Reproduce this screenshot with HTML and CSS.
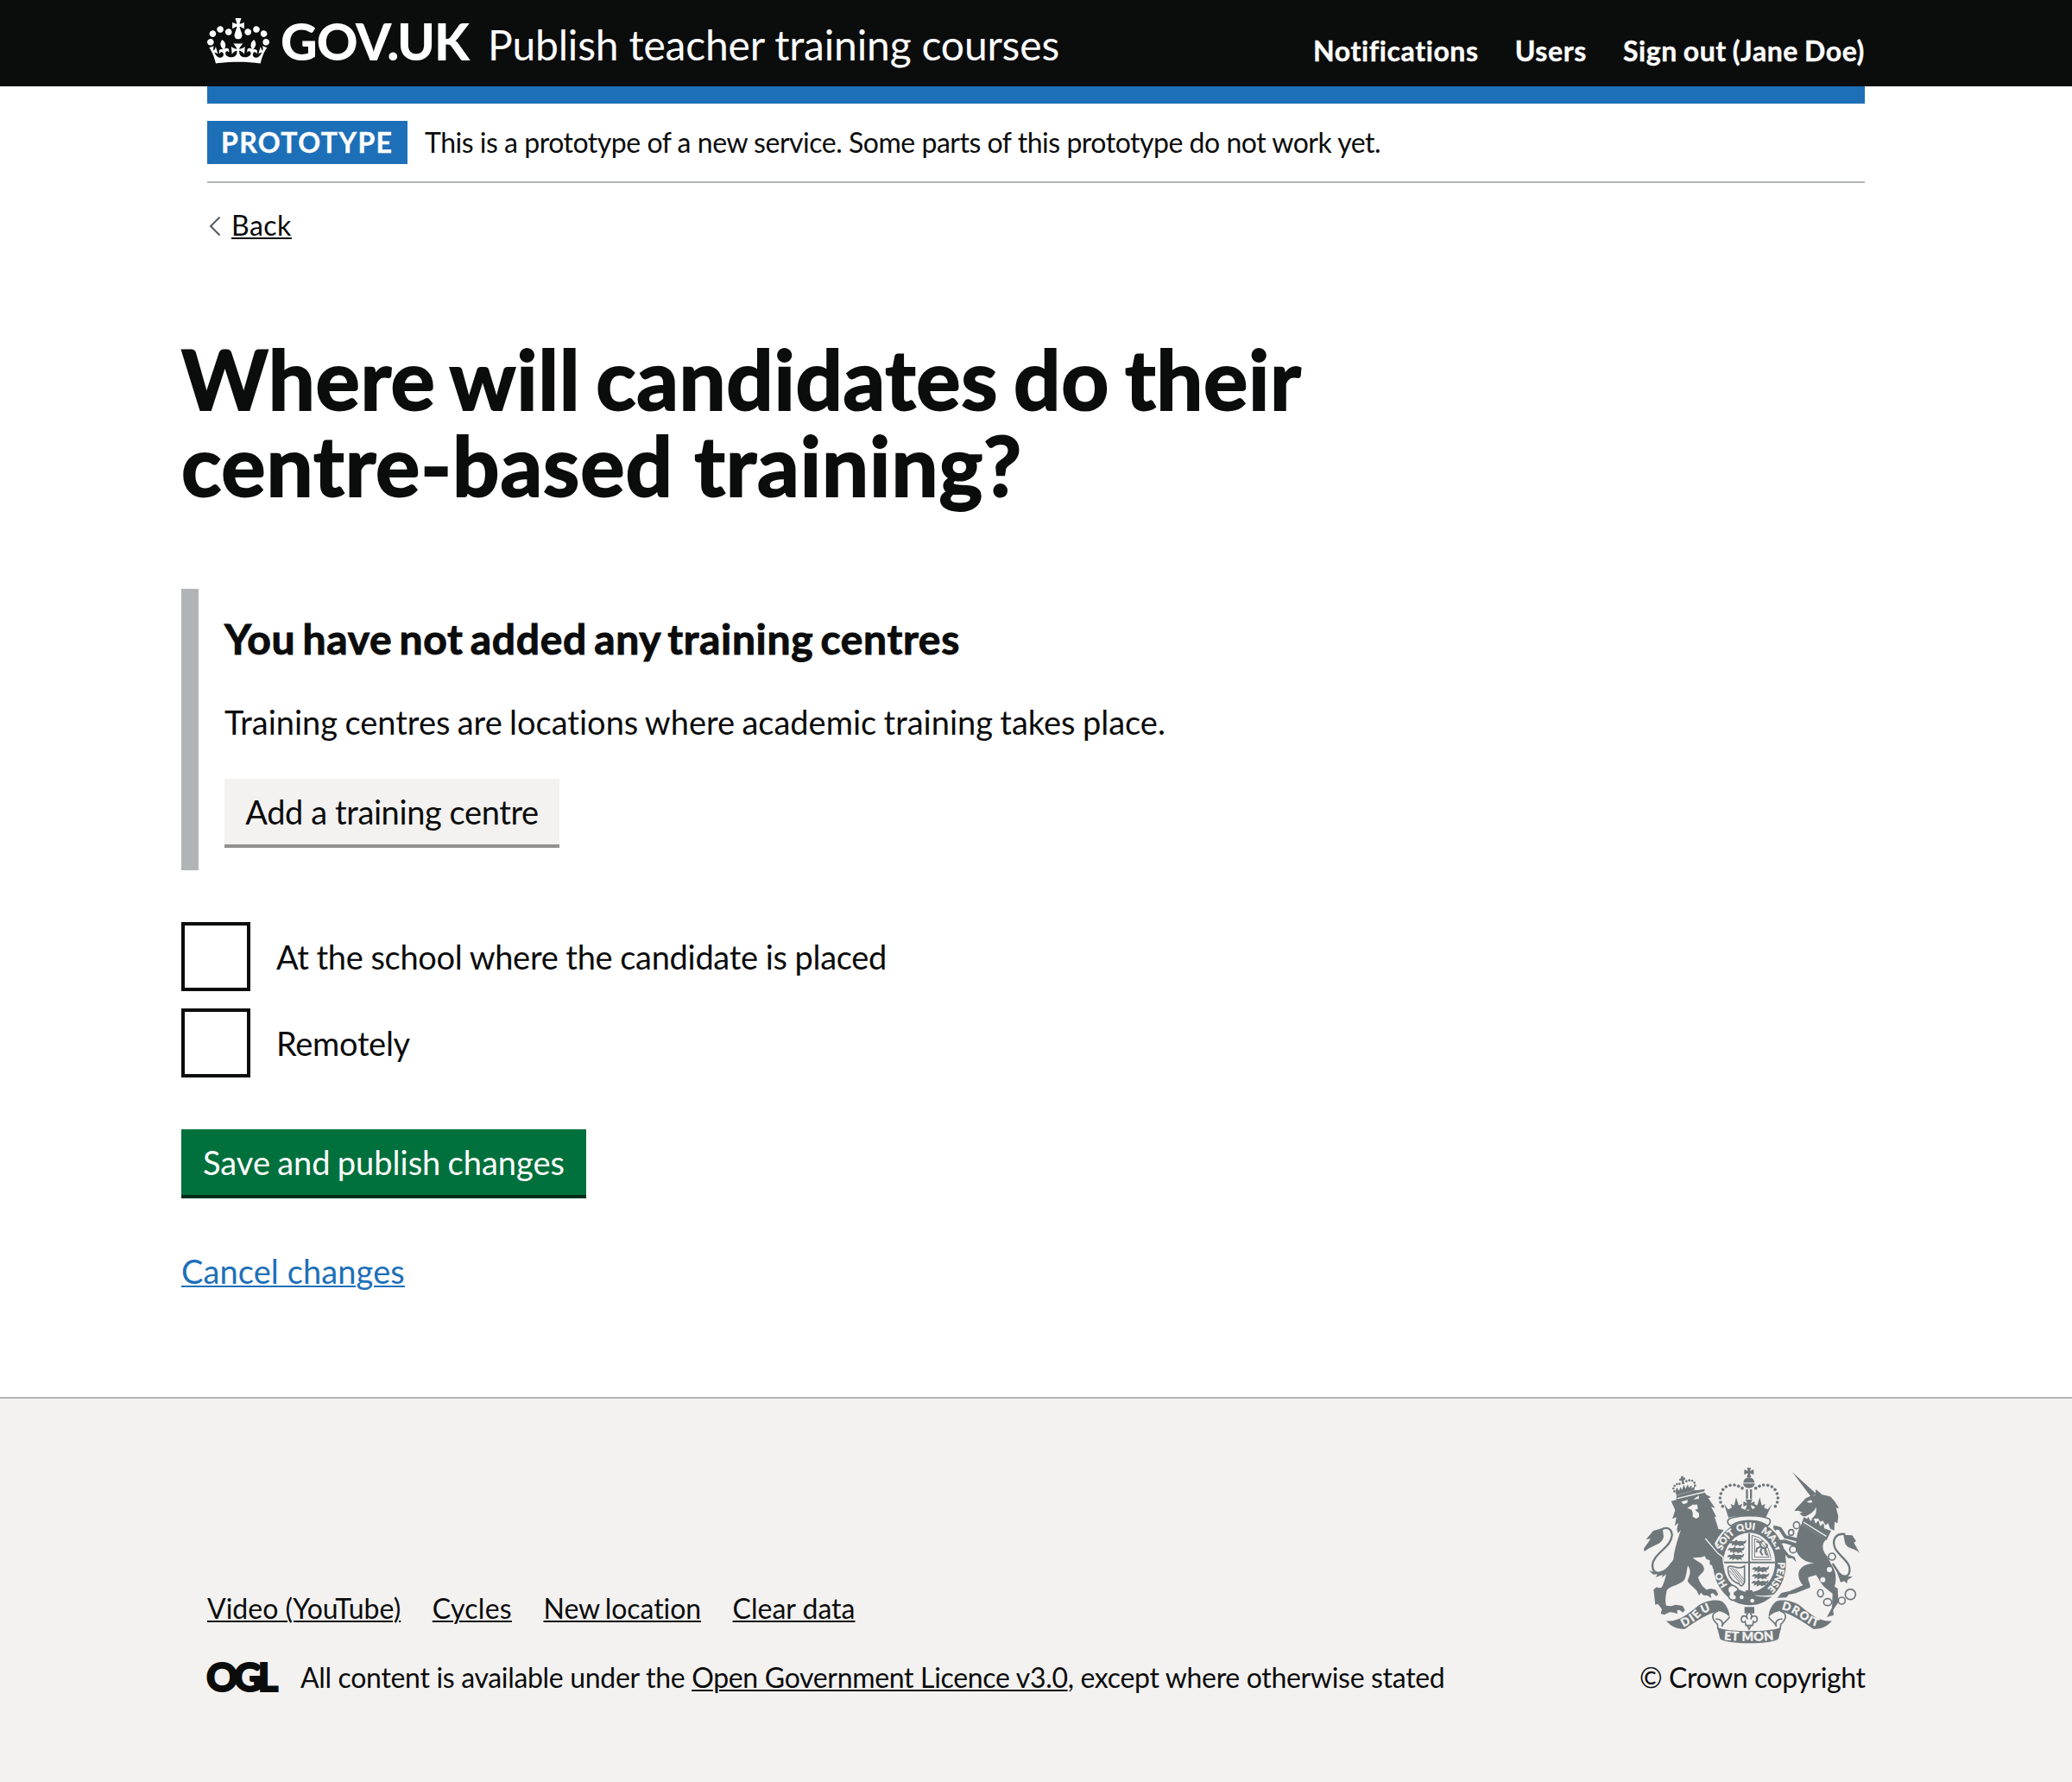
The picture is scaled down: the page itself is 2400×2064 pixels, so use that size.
FILE: index.html
```html
<!DOCTYPE html>
<html lang="en">
<head>
<meta charset="utf-8">
<title>Where will candidates do their centre-based training? - Publish teacher training courses</title>
<link rel="stylesheet" href="styles.css">
</head>
<body>
<header class="header">
  <div class="container header-inner">
    <svg class="crown" viewBox="0 0 132 97" aria-hidden="true"><path fill="currentColor" fill-rule="evenodd" d="M25 30.2c3.5 1.5 7.7-.2 9.1-3.7 1.5-3.6-.2-7.8-3.9-9.2-3.6-1.4-7.6.3-9.1 3.9-1.4 3.5.3 7.5 3.9 9zM9 39.5c3.6 1.5 7.8-.2 9.2-3.7 1.5-3.6-.2-7.8-3.9-9.1-3.6-1.5-7.6.2-9.1 3.8-1.4 3.5.3 7.5 3.8 9zM4.4 57.2c3.5 1.5 7.7-.2 9.1-3.8 1.5-3.6-.2-7.7-3.9-9.1-3.5-1.5-7.6.3-9.1 3.8-1.4 3.5.3 7.6 3.9 9.1zm38.3-21.4c3.5 1.5 7.7-.2 9.1-3.8 1.5-3.6-.2-7.7-3.9-9.1-3.6-1.5-7.6.3-9.1 3.8-1.3 3.6.4 7.7 3.9 9.1zm64.4-5.6c-3.6 1.5-7.8-.2-9.1-3.7-1.5-3.6.2-7.8 3.8-9.2 3.6-1.4 7.7.3 9.2 3.9 1.3 3.5-.4 7.5-3.9 9zm15.9 9.3c-3.6 1.5-7.7-.2-9.1-3.7-1.5-3.6.2-7.8 3.7-9.1 3.6-1.5 7.7.2 9.2 3.8 1.5 3.5-.3 7.5-3.8 9zm4.7 17.7c-3.6 1.5-7.8-.2-9.2-3.8-1.5-3.6.2-7.7 3.9-9.1 3.6-1.5 7.7.3 9.2 3.8 1.3 3.5-.4 7.6-3.9 9.1zM89.3 35.8c-3.6 1.5-7.8-.2-9.2-3.8-1.4-3.6.2-7.7 3.9-9.1 3.6-1.5 7.7.3 9.2 3.8 1.4 3.6-.3 7.7-3.9 9.1zM69.7 17.7l8.9 4.7V9.3l-8.9 2.8c-.2-.3-.5-.6-.9-.9L72.4 0H59.6l3.5 11.2c-.3.3-.6.5-.9.9l-8.8-2.8v13.1l8.8-4.7c.3.3.6.7.9.9l-5 15.4v.1c-.2.8-.4 1.6-.4 2.4 0 4.1 3.1 7.5 7 8.1h.2c.3 0 .7.1 1 .1.4 0 .7 0 1-.1h.2c4-.6 7.1-4.1 7.1-8.1 0-.8-.1-1.7-.4-2.4V34l-5.1-15.4c.4-.2.7-.6 1-.9zM66 92.8c16.9 0 32.8 1.1 47.1 3.2 4-16.9 8.9-26.7 14-33.5l-9.6-3.4c1 4.9 1.1 7.2 0 10.2-1.5-1.4-3-4.3-4.2-8.7L108.6 76c2.8-2 5-3.2 7.5-3.3-4.4 9.4-10 11.9-13.6 11.2-4.3-.8-6.3-4.6-5.6-7.9 1-4.7 5.7-5.9 8-.5 4.3-8.7-3-11.4-7.6-8.8 7.1-7.2 7.9-13.5 2.1-21.1-8 6.1-8.1 12.3-4.5 20.8-4.7-5.4-12.1-2.5-9.5 6.2 3.4-5.2 7.9-2 7.2 3.1-.6 4.3-6.4 7.8-13.5 7.2-10.3-.9-10.9-8-11.2-13.8 2.5-.5 7.1 1.8 11 7.3L80.2 60c-4.1 4.4-8 5.3-12.3 5.4 1.4-4.4 8-11.6 8-11.6H55.5s6.4 7.2 7.9 11.6c-4.2-.1-8-1-12.3-5.4l1.4 16.4c3.9-5.5 8.5-7.7 10.9-7.3-.3 5.8-.9 12.8-11.1 13.8-7.2.6-12.9-2.9-13.5-7.2-.7-5 3.8-8.3 7.1-3.1 2.7-8.7-4.6-11.6-9.4-6.2 3.7-8.5 3.6-14.7-4.6-20.8-5.8 7.6-5 13.9 2.2 21.1-4.7-2.6-11.9.1-7.7 8.8 2.3-5.5 7.1-4.2 8.1.5.7 3.3-1.3 7.1-5.7 7.9-3.5.7-9-1.8-13.5-11.2 2.5.1 4.7 1.3 7.5 3.3l-4.7-15.4c-1.2 4.4-2.7 7.2-4.3 8.7-1.1-3-.9-5.3 0-10.2l-9.5 3.4c5 6.9 9.9 16.7 14 33.5 14.8-2.1 30.8-3.2 47.7-3.2z"/></svg>
    <svg class="logotype" viewBox="0 0 222 60"><text x="0" y="50" textLength="219">GOV.UK</text></svg>
    <span class="service">Publish teacher training courses</span>
    <nav class="nav"><a>Notifications</a><a>Users</a><a>Sign out (Jane Doe)</a></nav>
  </div>
</header>
<div class="container">
  <div class="blue-bar"></div>
  <div class="phase"><strong class="tag">PROTOTYPE</strong><span class="phase-text">This is a prototype of a new service. Some parts of this prototype do not work yet.</span></div>
  <div class="back"><svg class="chevron" viewBox="0 0 14 24" aria-hidden="true"><path d="M12.5 1.5 2 12l10.500 10.500" fill="none" stroke="#505a5f" stroke-width="2"/></svg><a class="back-link">Back</a></div>
</div>
<main class="main">
  <h1 class="title"><span class="title-first">Where will candidates do their</span><span class="title-second">centre-based training?</span></h1>
  <section class="inset">
    <h2 class="inset-title">You have not added any training centres</h2>
    <p class="inset-text">Training centres are locations where academic training takes place.</p>
    <a class="button button-secondary">Add a training centre</a>
  </section>
  <div class="options">
    <label class="option"><input class="box" type="checkbox"><span class="option-long">At the school where the candidate is placed</span></label>
    <label class="option"><input class="box" type="checkbox"><span class="option-short">Remotely</span></label>
  </div>
  <a class="button button-primary">Save and publish changes</a>
  <a class="cancel">Cancel changes</a>
</main>
<footer class="footer">
  <div class="container footer-inner">
    <div>
      <div class="footer-links"><a>Video (YouTube)</a><a class="loose">Cycles</a><a class="tight">New location</a><a>Clear data</a></div>
      <div class="licence"><svg class="ogl" viewBox="0 0 84 40"><text x="-1" y="35.500" textLength="83">OGL</text></svg><span class="licence-text">All content is available under the <a>Open Government Licence v3.0</a>, except where otherwise stated</span></div>
    </div>
    <div class="copyright">
      <svg class="crest" viewBox="72 60 750 612" aria-hidden="true">
        <defs>
          <path id="garter" d="M138 457A101 115 0 0 1 138 227A101 115 0 0 1 138 457"/>
          <path id="motto-left" d="M210 614Q250 594 266 577T330 548"/>
          <path id="motto-right" d="M550 552Q590 560 622 586T690 614"/>
          <path id="motto-mid" d="M345 657Q438 667 530 657"/>
          <g id="beads"><circle cx="46" cy="146" r="5.500"/><circle cx="39" cy="132" r="5.500"/><circle cx="37" cy="117" r="5.500"/><circle cx="40" cy="102" r="5.500"/><circle cx="47" cy="88" r="5.500"/><circle cx="58" cy="78" r="5.500"/><circle cx="72" cy="73" r="5.500"/><circle cx="87" cy="72" r="5.500"/><circle cx="101" cy="76" r="5.500"/><circle cx="114" cy="83" r="5.500"/></g>
          <path id="passant" d="M0 12l8-8 10 2 8-6 5 6 10-2 12 2 8-6-3 12-8 3 4 8-9-4-8 4-6-5-12 6 1-7-12 4 4-8z"/>
        </defs>
        <!-- lion -->
        <g transform="translate(60 48)">
          <g class="ink"><circle cx="118" cy="94" r="4"/><circle cx="115" cy="84" r="4"/><circle cx="119" cy="75" r="4"/><circle cx="127" cy="69" r="4"/><circle cx="136" cy="68" r="4"/><circle cx="160" cy="59" r="4"/><circle cx="170" cy="56" r="4"/><circle cx="180" cy="57" r="4"/><circle cx="188" cy="64" r="4"/><circle cx="190" cy="74" r="4"/>
          <path d="M142 41h8l-1 6 6-1 2 7-6 1 2 14-8 2-2-14-7 2-1-7 6-2zM122 92l5-12 7 12 6-13 5 10 6-18 6 14 8-15 4 12 9-10 1 12 11-8-3 14-62 18z"/>
          <path d="M126 109l62-19 12 0 24-4-2 10 7 10 17 8-10 4 24 34-14-4 18 34-6 1 10 31 3 11 19 4-18 22-14 24 5 12 21 33 5 31-10 14-6-9-13 2-8 6-2-13-9-3 1-14-13-5-5-10-13 4-29 2c14 14 33 14 39 35 3 15-13 20-20 33 3 14 15 34 30 43l12-4 19 4 9 16-7 6-12-10-8 3 3 14-14-9-14-1-8-9-7 10-7-15c-8-13-28-23-33-37 8-18 14-33 1-52-4 17-4 30-10 46-12 22-52 22-63 40-4 20-7 40-2 53l17 2 16-5 24 4 8 15-7 8-12-9-8 1 1 12-14-4-13-1-19 9-12-4 4-16-14-18-9 3-6-52 10-9 9 3 9-2c15-24 13-58 41-98 2-30 14-67 26-102l-10 12-4-14 5-22-12 10 5-30-14 6 10-30-5-12-9-20 18-4z"/>
          <path d="M77 222l-32 9-25 30 16-2-24 34 2 10c30-25 62-22 67-52zM30 369l20 6 14 0 23-9 31-32-16 40-28 20 3-10-24 9 7-11-15 1z"/></g>
          <path class="line" stroke-width="7" d="M110 342C85 382 42 392 42 350C46 308 110 288 110 245C108 219 86 217 72 228"/>
          <g class="paper"><path d="M142 130l23-6-2 10-13 5zM184 122l20-14-1 12zM163 152l19-12 16 0 2 15-10 3 14 12v12l-10 7-12-7 0-14-4-10z"/></g>
          <path class="cut" stroke-width="4" d="M128 119L224 96"/>
        </g>
        <!-- crown, garter and shield -->
        <g transform="translate(300 48)">
          <use href="#beads" class="ink"/><use href="#beads" class="ink" transform="matrix(-1 0 0 1 275 0)"/>
          <path class="ink" d="M130 11h15l-4 12 13-5v18l-13-5 4 14h-15l4-14-13 5V18l13 5zM118 64c2-24 37-24 39 0zM117 67h41c-2 12-12 16-20 16s-19-4-21-16zM127 87h7v34h-7zM141 87h7v34h-7zM125 123h25l-7 12 14-6v18l-14-5 7 16h-25l6-16-13 5v-18l14 6zM51 137l14 20 13-6-4-13 12 5 7-28 9 28 12-6-4 15 24 9 24-9-4-15 12 6 9-28 7 28 12-5-4 13 13 6 15-20-22 48c-40-10-92-10-130 0z"/>
          <path class="ink" fill-rule="evenodd" d="M140 196A127 147 0 1 1 139 490A127 147 0 1 1 140 196ZM138 238A90 103 0 1 0 139 444A90 103 0 1 0 138 238Z"/>
          <path class="ring" d="M68 190C100 175 176 175 208 190C218 204 206 210 202 214C170 190 106 190 74 214C60 206 62 196 68 190Z"/>
          <path class="line" stroke-width="6" d="M138 240V444M50 341H228"/>
          <path class="line" stroke-width="3" d="M148 247V332H215M148 247Q202 255 214 326M157 258V323H207M157 258Q193 268 206 323"/>
          <path class="line" stroke-width="6" d="M163 268l12 4 4 14 14 8 2 16M179 286l-14 6-2 14M175 272l12-6M193 294l8-10-4-8M183 290l-6 14 8 12M195 310l6 6"/>
          <use href="#passant" class="ink" x="68" y="262"/><use href="#passant" class="ink" x="62" y="286"/><use href="#passant" class="ink" x="60" y="310"/>
          <use href="#passant" class="ink" x="147" y="353"/><use href="#passant" class="ink" x="147" y="377"/><use href="#passant" class="ink" x="145" y="401"/>
          <path class="line" stroke-width="5" d="M65 356C82 348 100 370 122 354V410Q112 432 103 415C78 408 62 385 65 356"/>
          <path class="line" stroke-width="3" d="M72 360L116 416M80 360L118 408M90 364L120 400M70 370L106 412"/>
          <path class="ink" d="M126 438h24v10h-24z"/>
          <g class="motto ring-motto"><text><textPath href="#garter" startOffset="112" text-anchor="middle">HO</textPath></text><text><textPath href="#garter" startOffset="250" text-anchor="middle">SOIT</textPath></text><text><textPath href="#garter" startOffset="328" text-anchor="middle">QUI</textPath></text><text><textPath href="#garter" startOffset="426" text-anchor="middle">MALY</textPath></text><text><textPath href="#garter" startOffset="558" text-anchor="middle">PENSE</textPath></text></g>
          <path class="cut" stroke-width="5" d="M160 457Q190 462 232 454"/>
          <path class="ink" d="M92 434Q130 456 202 462Q150 496 84 474Z"/>
          <path class="ring" d="M64 430q12-18 30-2 10 8 0 14-16 6 0 16 4 16-16 14-16-8-8-22-8-8-6-20z"/>
          <circle class="paper" cx="112" cy="462" r="7"/><circle class="paper" cx="149" cy="474" r="7"/>
          <path class="ink" d="M122 496h34v22h-10l-7-7-8 7h-9z"/>
          <path class="ring" d="M138 510l9 15-3 14c5-17 23-14 22 0 0 10-9 13-13 7l-3 14h-23l-3-14c-7 7-15 0-13-9 2-15 20-12 21 2l-3-14zM131 560l7 13 7-13"/>
        </g>
        <!-- lion paw laid over the garter -->
        <path class="cut" stroke-width="4" d="M286 306L330 358L347 370L350 398"/>
        <path class="ink" d="M284 312l42 50 17 12 2 26-6 14-12-8-10 6-10-16-18-44z"/>
        <!-- scrolls -->
        <path class="ink" d="M150 592C190 597 225 570 260 540C285 523 320 515 345 525C362 540 370 560 370 578C358 566 345 560 330 558C300 565 250 595 215 620C185 622 165 610 150 592Z"/>
        <path class="ink" d="M726 592C686 597 651 570 616 540C591 523 556 515 531 525C514 540 506 560 506 578C518 566 531 560 546 558C576 565 626 595 661 620C691 622 711 610 726 592Z"/>
        <path class="ink" d="M327 614C360 632 516 632 549 614L540 655C515 675 361 675 337 655Z"/>
        <path class="line" stroke-width="5" d="M330 558C300 568 312 590 328 604L330 622M370 578C366 590 350 592 343 612C350 594 338 584 322 586M546 558C576 568 564 590 548 604L546 622M506 578C510 590 526 592 533 612C526 594 538 584 554 586"/>
        <g class="motto"><text class="motto-side"><textPath href="#motto-left" textLength="112">DIEU</textPath></text><text class="motto-side"><textPath href="#motto-right" textLength="140">DROIT</textPath></text><text class="motto-base"><textPath href="#motto-mid" startOffset="5" textLength="174">ET MON</textPath></text></g>
        <!-- unicorn -->
        <g transform="translate(540 48)">
          <path class="ink" d="M48 27L133 104L112 112ZM61 154l34-36 15-7 18-3 2-21 14 11 6 7 30 7 15 16 15 24-10 0 8 28-3 25-10-5-1 30-14-6-8-20-8 8-10-16-8 4-8-12-24 2c20-14 18-28 16-42-4 16-15 22-35 33l-10 0-12-10 10-4-14-6-14 2z"/>
          <path class="paper" d="M98 130l16-6 4 8-10 2z"/>
          <path class="ink" d="M88 184l12 6 3-8 9 16 9-13 8 21 10-11 6 20 12-10 2 18 24 8-16 33-87-56z"/>
          <path class="cut" stroke-width="4" d="M87 201L166 250"/>
          <path class="ink" d="M80 208L165 262C150 275 150 300 168 318L185 350C202 375 202 400 195 425L206 432L208 480L190 506L192 524L168 531L186 498L188 450L158 425C140 405 138 392 130 385L105 392C98 400 112 412 110 428L60 448L35 453L28 463L-4 464L10 447L40 440L85 420C63 395 62 360 100 348L125 342C100 345 70 325 62 300C58 270 65 230 80 208Z"/>
          <path class="line" stroke-width="12" d="M64 262L24 252L6 224L-12 219M66 282L22 268L-2 270L16 300"/>
          <path class="ink" d="M-16 210l12 14-6 8-8-10zM8 296l14 0 14 18 20 8 6 18-14-14-14 0-12-14z"/>
          <path class="line" stroke-width="7" d="M232 243C200 238 184 262 197 292C212 322 252 338 247 372C243 396 222 392 210 378L188 345"/>
          <path class="ink" d="M226 245l30 2 14 20-8 5 20 36c-20-20-48-12-52-40zM200 366l24 24 34 0-18 12-2 12-10-8-12 4z"/>
          <g class="ring"><ellipse cx="63" cy="212" rx="11" ry="12"/><ellipse cx="44" cy="237" rx="9" ry="10"/><ellipse cx="51" cy="296" rx="12" ry="12"/><circle cx="186" cy="321" r="12"/><ellipse cx="146" cy="448" rx="10" ry="13"/><ellipse cx="171" cy="479" rx="14" ry="12"/><circle cx="220" cy="474" r="12"/><circle cx="250" cy="452" r="18"/></g>
          <circle class="paper" cx="177" cy="366" r="9"/><circle class="paper" cx="154" cy="401" r="9"/>
        </g>
      </svg>
      <span>© Crown copyright</span>
    </div>
  </div>
</footer>
</body>
</html>
```
FILE: styles.css
```css
* { box-sizing: border-box; }
body {
  margin: 0;
  background: #fff;
  color: #0b0c0c;
  font-family: Lato, "Liberation Sans", sans-serif;
  font-size: 38px;
  line-height: 50px;
  font-variant-ligatures: none;
}
h1, h2, p { margin: 0; }
.container { width: 1920px; margin: 0 auto; }

.header { height: 100px; background: #0b0c0c; color: #fff; }
.header-inner { display: flex; align-items: flex-start; }
.crown { width: 72px; height: 53px; margin-top: 21px; }
.logotype { width: 222px; height: 60px; margin: 20px 0 0 13px; overflow: visible; }
.logotype text { fill: #fff; font-size: 59px; font-weight: 900; }
.service { margin: 22px 0 0 18px; font-size: 48px; line-height: 60px; letter-spacing: -.18px; }
.nav { display: flex; gap: 42px; margin: 38px 0 0 auto; font-size: 32px; line-height: 41px; font-weight: 700; letter-spacing: .6px; word-spacing: -1.500px; -webkit-text-stroke: .4px; }

.blue-bar { height: 20px; background: #1d70b8; }
.phase { display: flex; gap: 20px; padding: 20px 0; border-bottom: 2px solid #b1b4b6; font-size: 32px; line-height: 49px; }
.tag { height: 50px; width: 232px; padding: 0 16px; background: #1d70b8; color: #fff; letter-spacing: 1.4px; white-space: nowrap; -webkit-text-stroke: .4px; }
.phase-text { letter-spacing: -.48px; }
.back { display: flex; align-items: center; gap: 12px; margin-top: 29px; padding-left: 2px; font-size: 32px; line-height: 40px; }
.chevron { width: 14px; height: 24px; margin-top: 2px; }
.back-link { letter-spacing: .5px; }
.back-link, .footer a, .cancel { text-decoration: underline 2px; text-underline-offset: 2px; }

.main { display: flex; flex-direction: column; align-items: flex-start; width: 1980px; margin: 107px auto 121px; }
.title { font-size: 96px; line-height: 100px; font-weight: 700; -webkit-text-stroke: 2px; }
.title span { display: block; }
.title-first { letter-spacing: .65px; word-spacing: -6px; }
.title-second { letter-spacing: .95px; }
.inset { height: 326px; margin-top: 94px; padding: 28px 0 0 30px; border-left: 20px solid #b1b4b6; }
.inset-title { margin-bottom: 41px; font-size: 48px; line-height: 60px; letter-spacing: .65px; word-spacing: -4px; -webkit-text-stroke: 1px; }
.inset-text { margin-bottom: 41px; letter-spacing: 0; word-spacing: -1.400px; }
.button { display: block; width: max-content; height: 80px; padding: 1px 24px 0; line-height: 75px; text-align: center; white-space: nowrap; }
.button-secondary { width: 388px; background: #f3f2f1; border-bottom: 4px solid #929191; letter-spacing: -.4px; }
.button-primary { width: 469px; margin-top: 60px; background: #00703c; border-bottom: 4px solid #002d18; color: #fff; letter-spacing: 0; word-spacing: -1.500px; }
.options { display: flex; flex-direction: column; gap: 20px; margin-top: 60px; }
.option { display: flex; gap: 30px; height: 80px; line-height: 81px; }
.option-long { letter-spacing: -.3px; word-spacing: -.5px; }
.option-short { letter-spacing: -.3px; }
.box { appearance: none; width: 80px; height: 80px; margin: 0; border: 4px solid #0b0c0c; background: #fff; }
.cancel { margin-top: 59px; color: #1d70b8; letter-spacing: .1px; }

.footer { height: 446px; padding-top: 80px; background: #f3f2f1; border-top: 2px solid #b1b4b6; font-size: 32px; line-height: 40px; }
.footer-inner { display: flex; justify-content: space-between; align-items: flex-end; height: 263px; }
.footer-links { display: flex; gap: 36.500px; margin-bottom: 40px; }
.loose { letter-spacing: .3px; }
.tight { letter-spacing: -.05px; word-spacing: -2px; }
.licence { display: flex; gap: 24px; letter-spacing: -.32px; }
.ogl { width: 84px; height: 40px; overflow: visible; }
.ogl text { fill: #0b0c0c; stroke: #0b0c0c; stroke-width: 2px; font-size: 45px; font-weight: 900; }
.copyright { display: flex; flex-direction: column; width: 261px; letter-spacing: -.4px; white-space: nowrap; }
.crest { width: 250px; height: 204px; margin: 0 0 19px 5px; }
.ink { fill: #6f777b; }
.paper { fill: #f3f2f1; }
.line { fill: none; stroke: #6f777b; }
.cut { fill: none; stroke: #f3f2f1; }
.ring { fill: #f3f2f1; stroke: #6f777b; stroke-width: 5; }
.motto { fill: #f3f2f1; stroke: #f3f2f1; stroke-width: 1px; font-weight: 900; letter-spacing: 0; }
.ring-motto { font-size: 33px; }
.motto-side { font-size: 39px; }
.motto-base { font-size: 43px; }
```
